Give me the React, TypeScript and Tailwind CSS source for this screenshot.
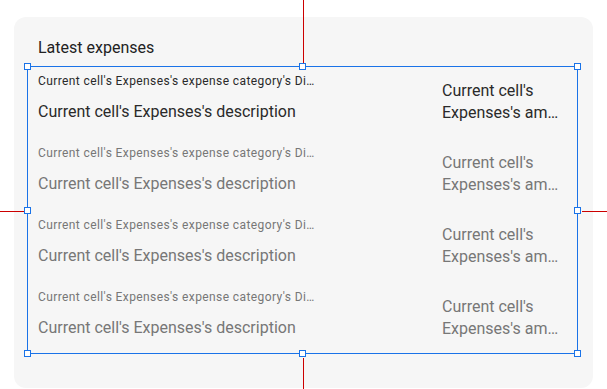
import React from "react";

const rows = [0, 1, 2, 3];

const Handle = ({ className }: { className: string }) => (
  <div
    className={`absolute w-[7px] h-[7px] bg-white border border-[#1a73e8] ${className}`}
  />
);

const App = () => {
  return (
    <div className="relative w-[607px] h-[389px] bg-white overflow-hidden font-['Roboto',sans-serif]">
      <div className="ml-[14px] mt-[17px] w-[579px] h-[371px] rounded-[12px] bg-[#f6f6f6] pt-[20px] px-[13px]">
        <h2 className="pl-[11px] text-[16px] leading-[22px] text-[#222]">
          Latest expenses
        </h2>
        <div className="relative mt-[7px] w-[551px] h-[288px] border border-[#1a73e8]">
          {rows.map((i) => (
            <div
              key={i}
              className={`flex items-start justify-between h-[72px] pl-[10px] pr-[14px] ${
                i === 0 ? "text-[#2a2a2a]" : "text-[#777]"
              }`}
            >
              <div className="w-[282px] pt-[6px] flex flex-col">
                <p className="text-[12px] leading-4 tracking-[0.4px] truncate">
                  Current cell's Expenses's expense category's Display name
                </p>
                <p className="mt-3 text-[16px] leading-[22px] truncate">
                  Current cell's Expenses's description
                </p>
              </div>
              <div className="mt-[13px] w-[121px] flex flex-col text-[16px] leading-[22px]">
                <p className="truncate">Current cell's</p>
                <p className="truncate">Expenses's amount</p>
              </div>
            </div>
          ))}
          <Handle className="-left-[4px] -top-[4px]" />
          <Handle className="left-[271px] -top-[4px]" />
          <Handle className="-right-[4px] -top-[4px]" />
          <Handle className="-left-[4px] top-[140px]" />
          <Handle className="-right-[4px] top-[140px]" />
          <Handle className="-left-[4px] -bottom-[4px]" />
          <Handle className="left-[271px] -bottom-[4px]" />
          <Handle className="-right-[4px] -bottom-[4px]" />
        </div>
      </div>
      <div className="absolute left-[303px] top-0 w-px h-[63px] bg-[#cc0000]" />
      <div className="absolute left-[303px] top-[358px] w-px h-[31px] bg-[#cc0000]" />
      <div className="absolute left-0 top-[211px] w-[24px] h-px bg-[#cc0000]" />
      <div className="absolute left-[582px] top-[211px] w-[25px] h-px bg-[#cc0000]" />
    </div>
  );
};

export default App;
